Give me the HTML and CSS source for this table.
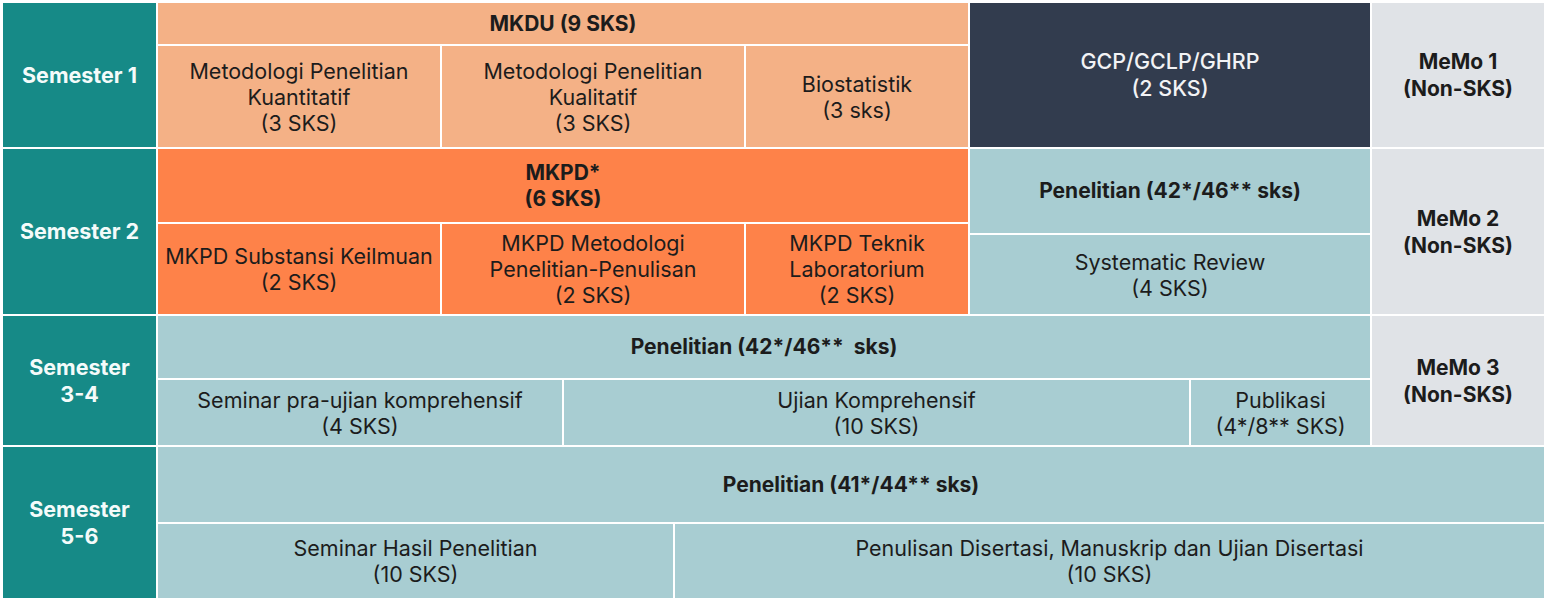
FILE: index.html
```html
<!DOCTYPE html>
<html lang="id">
<head>
<meta charset="utf-8">
<title>Kurikulum Program Doktor</title>
<link rel="stylesheet" href="styles.css">
</head>
<body>
<div class="plan">
  <div class="cell sem s1">Semester 1</div>
  <div class="cell peach b mkdu">MKDU (9 SKS)</div>
  <div class="cell peach kuant">Metodologi Penelitian<br>Kuantitatif<br>(3 SKS)</div>
  <div class="cell peach kual">Metodologi Penelitian<br>Kualitatif<br>(3 SKS)</div>
  <div class="cell peach bio">Biostatistik<br>(3 sks)</div>
  <div class="cell navy gcp">GCP/GCLP/GHRP<br>(2 SKS)</div>
  <div class="cell gray b memo1">MeMo 1<br>(Non-SKS)</div>

  <div class="cell sem s2">Semester 2</div>
  <div class="cell orange b mkpd">MKPD*<br>(6 SKS)</div>
  <div class="cell orange subst">MKPD Substansi Keilmuan<br>(2 SKS)</div>
  <div class="cell orange metod">MKPD Metodologi<br>Penelitian-Penulisan<br>(2 SKS)</div>
  <div class="cell orange lab">MKPD Teknik<br>Laboratorium<br>(2 SKS)</div>
  <div class="cell blue b pen2">Penelitian (42*/46** sks)</div>
  <div class="cell blue sysrev">Systematic Review<br>(4 SKS)</div>
  <div class="cell gray b memo2">MeMo 2<br>(Non-SKS)</div>

  <div class="cell sem s3">Semester<br>3-4</div>
  <div class="cell blue b pen3">Penelitian (42*/46**&nbsp; sks)</div>
  <div class="cell blue pra">Seminar pra-ujian komprehensif<br>(4 SKS)</div>
  <div class="cell blue ukom">Ujian Komprehensif<br>(10 SKS)</div>
  <div class="cell blue pub">Publikasi<br>(4*/8** SKS)</div>
  <div class="cell gray b memo3">MeMo 3<br>(Non-SKS)</div>

  <div class="cell sem s5">Semester<br>5-6</div>
  <div class="cell blue b pen5">Penelitian (41*/44** sks)</div>
  <div class="cell blue hasil">Seminar Hasil Penelitian<br>(10 SKS)</div>
  <div class="cell blue tulis">Penulisan Disertasi, Manuskrip dan Ujian Disertasi<br>(10 SKS)</div>
</div>
</body>
</html>
```
FILE: styles.css
```css
html, body {
  margin: 0;
  padding: 0;
  background: #ffffff;
}

body {
  font-family: Inter, "Noto Sans", "Liberation Sans", sans-serif;
  color: #1c1c1c;
}

.plan {
  display: grid;
  grid-template-columns: 153px 282px 120px 109px 69px 222px 219px 179px 172px;
  grid-template-rows: 41px 101px 73px 9px 79px 62px 65px 75px 74px;
  gap: 2px;
  padding: 3px 0 0 3px;
  width: max-content;
}

.cell {
  display: flex;
  align-items: center;
  justify-content: center;
  text-align: center;
  font-size: 21.5px;
  line-height: 26px;
  font-weight: 400;
  letter-spacing: 0;
}

.b { font-weight: 700; font-size: 21px; }

.sem {
  background: #168a87;
  color: #f4fbfa;
  font-weight: 700;
  font-size: 21.5px;
  line-height: 27px;
}

.peach { background: #f4b186; }
.orange { background: #fe8249; }
.navy { background: #323c4e; color: #f2f3f5; font-weight: 500; line-height: 27px; }
.blue { background: #a8cdd2; }
.gray { background: #e0e3e7; line-height: 27px; }

.s1 { grid-column: 1; grid-row: 1 / 3; }
.mkdu { grid-column: 2 / 7; grid-row: 1; }
.kuant { grid-column: 2; grid-row: 2; }
.kual { grid-column: 3 / 6; grid-row: 2; }
.bio { grid-column: 6; grid-row: 2; }
.gcp { grid-column: 7 / 9; grid-row: 1 / 3; }
.memo1 { grid-column: 9; grid-row: 1 / 3; }

.s2 { grid-column: 1; grid-row: 3 / 6; }
.mkpd { grid-column: 2 / 7; grid-row: 3; }
.subst { grid-column: 2; grid-row: 4 / 6; }
.metod { grid-column: 3 / 6; grid-row: 4 / 6; }
.lab { grid-column: 6; grid-row: 4 / 6; }
.pen2 { grid-column: 7 / 9; grid-row: 3 / 5; }
.sysrev { grid-column: 7 / 9; grid-row: 5; }
.memo2 { grid-column: 9; grid-row: 3 / 6; }

.s3 { grid-column: 1; grid-row: 6 / 8; }
.pen3 { grid-column: 2 / 9; grid-row: 6; }
.pra { grid-column: 2 / 4; grid-row: 7; }
.ukom { grid-column: 4 / 8; grid-row: 7; }
.pub { grid-column: 8; grid-row: 7; }
.memo3 { grid-column: 9; grid-row: 6 / 8; }

.s5 { grid-column: 1; grid-row: 8 / 10; }
.pen5 { grid-column: 2 / 10; grid-row: 8; }
.hasil { grid-column: 2 / 5; grid-row: 9; }
.tulis { grid-column: 5 / 10; grid-row: 9; }
```
